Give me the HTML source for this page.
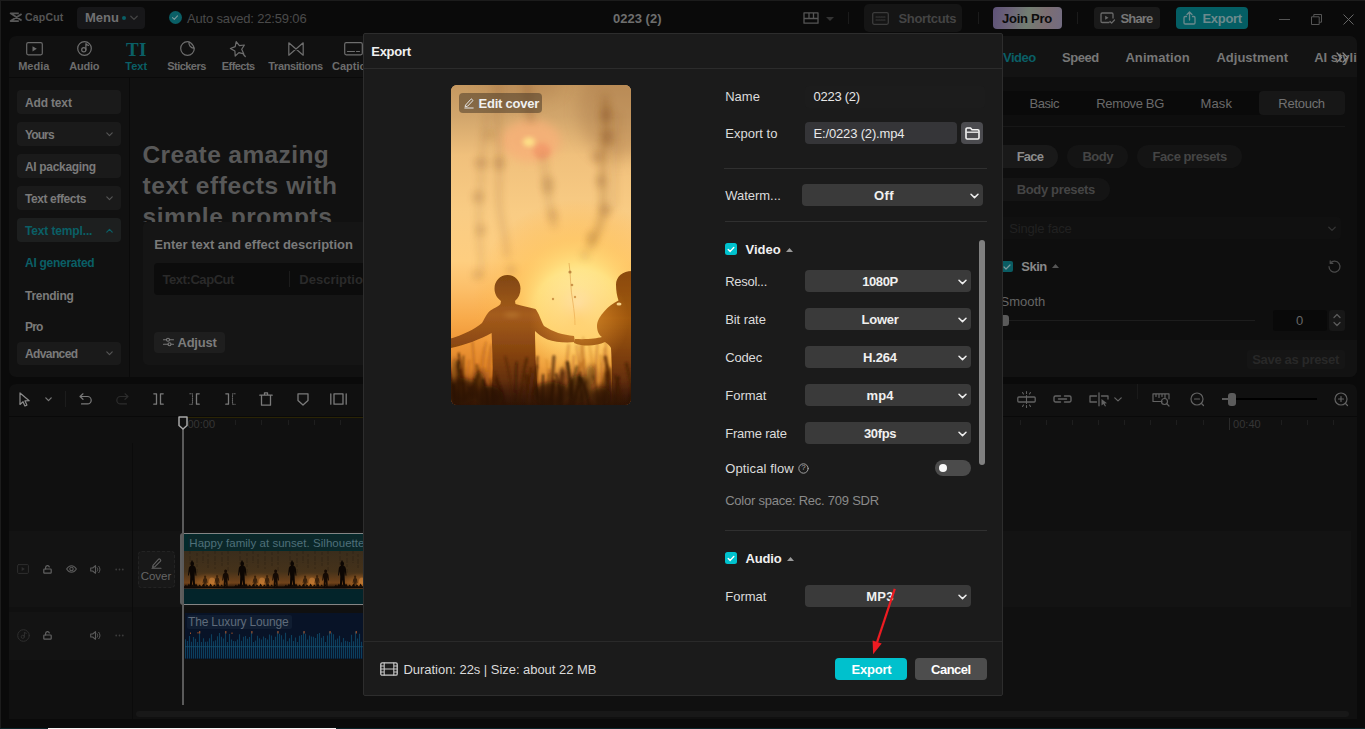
<!DOCTYPE html>
<html><head><meta charset="utf-8"><title>Export</title>
<style>
*{box-sizing:border-box;margin:0;padding:0}
html,body{width:1365px;height:729px;overflow:hidden;background:#0a0a0a;font-family:"Liberation Sans",sans-serif;}
#app{position:absolute;left:0;top:0;width:1365px;height:729px;background:#0a0a0a;overflow:hidden}
.a{position:absolute}
.t{position:absolute;white-space:nowrap;line-height:1;transform:translateY(calc(-50% - .7px));font-size:12px;color:#7a7a7a}
.b{font-weight:bold}
.c{transform:translate(-50%,calc(-50% - .7px))}
.pn{position:absolute;background:#111;}
.sb{position:absolute;left:17px;width:104px;height:24px;background:#1a1a1a;border-radius:4px}
svg{position:absolute;overflow:visible}
.ic{fill:none;stroke:#6e6e6e;stroke-width:1.2;stroke-linecap:round;stroke-linejoin:round}
/* dialog */
#dlg{position:absolute;left:363px;top:33px;width:640px;height:663px;background:#1b1b1b;border:1px solid #2d2d2d;border-radius:2px}
.dt{color:#dcdcdc;font-size:13px}
.dd{position:absolute;height:23px;background:#3a3a3a;border-radius:4px}
.hr{position:absolute;height:1px;background:#303030}
</style></head><body>
<div id="app">
<!--TOPBAR-->
<!-- top bar -->
<div class="a" style="left:0;top:0;width:1365px;height:1px;background:#1c1c1c"></div>
<div class="a" style="left:0;top:0;width:1px;height:729px;background:#1c1c1c"></div>
<svg style="left:8.8px;top:11.8px" width="14" height="11" viewBox="0 0 14 11"><path d="M9.8 1.3H1.600L12.600 8.500M9.800 9.100H1.600L12.600 1.900" fill="none" stroke="#585858" stroke-width="1.8" stroke-linejoin="round" stroke-linecap="butt"/></svg>
<span class="t b" id="lg" style="left:25px;top:17.800px;font-size:10.500px;color:#555;letter-spacing:0.19px">CapCut</span>
<div class="a" style="left:77px;top:7px;width:68px;height:22px;background:#171719;border-radius:4px"></div>
<span class="t b" id="mn" style="left:85px;top:18px;font-size:13px;color:#707072">Menu</span>
<div class="a" style="left:122px;top:16px;width:4px;height:4px;border-radius:2px;background:#0a5f66"></div>
<svg style="left:130px;top:15px" width="8" height="6" viewBox="0 0 8 6"><path d="M.8 1.2 4 4.4 7.200 1.2" class="ic" style="stroke:#444;stroke-width:1.3"/></svg>
<div class="a" style="left:168.500px;top:11px;width:13px;height:13px;border-radius:7px;background:#0a5f66"></div>
<svg style="left:171px;top:14px" width="8" height="7" viewBox="0 0 8 7"><path d="M1.5 3.600 3.300 5.300 6.500 1.800" class="ic" style="stroke:#7a9a9c;stroke-width:1.1"/></svg>
<span class="t" id="as" style="left:187px;top:18.500px;font-size:13px;color:#4a4a4a;letter-spacing:-0.17px">Auto saved: 22:59:06</span>
<span class="t b" id="ttl" style="left:613px;top:18.500px;font-size:13px;color:#6e6e6e;letter-spacing:0.01px">0223 (2)</span>
<svg style="left:803px;top:12px" width="16" height="12" viewBox="0 0 16 12"><path d="M1 .8h14v10.400H1zM1 6.500h14M6 .8v5.700M10.500 .8v5.700" class="ic" style="stroke:#555;stroke-width:1.3"/></svg>
<svg style="left:825.500px;top:16.500px" width="8" height="4" viewBox="0 0 8 4"><path d="M0 0h8L4 4z" fill="#333"/></svg>
<div class="a" style="left:848px;top:12px;width:1px;height:12px;background:#1b1b1b"></div>
<div class="a" style="left:864px;top:4px;width:98px;height:28px;background:#151515;border-radius:5px"></div>
<svg style="left:872px;top:11.500px" width="17" height="13" viewBox="0 0 17 13"><rect x=".7" y=".7" width="15.600" height="11.600" rx="1.5" class="ic" style="stroke:#3c3c3c;stroke-width:1.3"/><path d="M4 5h9M4 8h9" class="ic" style="stroke:#3c3c3c;stroke-width:1.200;stroke-dasharray:1.5 1"/></svg>
<span class="t b" id="sc" style="left:898.500px;top:18.500px;font-size:13px;color:#444;letter-spacing:-0.33px">Shortcuts</span>
<div class="a" style="left:978px;top:12px;width:1px;height:12px;background:#1b1b1b"></div>
<div class="a" style="left:993px;top:7px;width:69px;height:22px;border-radius:4px;background:linear-gradient(100deg,#5e5278 0%,#6c6478 25%,#727e72 50%,#7c6e72 75%,#726c82 100%)"></div>
<span class="t b" id="jp" style="left:1002px;top:18.500px;font-size:13px;color:#0c0c0c;letter-spacing:-0.25px">Join Pro</span>
<div class="a" style="left:1077px;top:12px;width:1px;height:12px;background:#1b1b1b"></div>
<div class="a" style="left:1094px;top:7px;width:66px;height:22px;background:#1a1a1a;border-radius:4px"></div>
<svg style="left:1100px;top:12px" width="15" height="12" viewBox="0 0 15 12"><path d="M9 10.500H2.200A1.200 1.200 0 0 1 1 9.300V2.200A1.200 1.200 0 0 1 2.200 1h9.600A1.200 1.200 0 0 1 13 2.200V6M10 9.500l1.600 1.600 2.900-3.100" class="ic" style="stroke:#6a6a6a;stroke-width:1.3"/><path d="M5.200 3.800v4l3.300-2z" fill="#6a6a6a"/></svg>
<span class="t b" id="sh" style="left:1120.500px;top:18.500px;font-size:13px;color:#777;letter-spacing:-0.83px">Share</span>
<div class="a" style="left:1176px;top:7px;width:72px;height:22px;background:#045e64;border-radius:4px"></div>
<svg style="left:1183px;top:11px" width="13" height="14" viewBox="0 0 13 14"><path d="M3.500 5.500H2.200A1.200 1.200 0 0 0 1 6.700v5.100A1.200 1.200 0 0 0 2.200 13h8.600a1.200 1.200 0 0 0 1.200-1.200V6.700a1.200 1.200 0 0 0-1.200-1.200H9.500M6.500 9V1.200M4 3.500 6.500 1 9 3.500" class="ic" style="stroke:#6c8a8d;stroke-width:1.3"/></svg>
<span class="t b" id="ex" style="left:1202.500px;top:18.500px;font-size:13px;color:#6c8a8d;letter-spacing:-0.3px">Export</span>
<div class="a" style="left:1279px;top:18.500px;width:10.500px;height:1px;background:#555"></div>
<svg style="left:1311px;top:13.500px" width="11" height="11" viewBox="0 0 11 11"><path d="M.5 2.800h7.700v7.700H.5zM2.800 2.800V.5h7.700v7.700H8.200" fill="none" stroke="#555" stroke-width="1"/></svg>
<svg style="left:1343px;top:13.500px" width="11" height="11" viewBox="0 0 11 11"><path d="M.5.500l10 10M10.500.5l-10 10" fill="none" stroke="#666" stroke-width="1"/></svg>
<!--/TOPBAR-->
<!--LEFT-->
<!-- left panel -->
<div class="pn" style="left:9px;top:36px;width:354px;height:341px;border-radius:7px 0 0 7px"></div>
<div class="a" style="left:9px;top:77px;width:354px;height:1px;background:#0a0a0a"></div>
<div class="a" style="left:129px;top:78px;width:1px;height:299px;background:#0a0a0a"></div>
<!-- tabs -->
<svg style="left:26px;top:41.8px" width="17" height="14" viewBox="0 0 17 14"><rect x=".7" y=".7" width="15.600" height="12.100" rx="1.5" class="ic" style="stroke:#6a6a6a"/><path d="M6.500 4.200v5.200l4.300-2.600z" fill="#6a6a6a"/></svg>
<span class="t b c" id="t1" style="left:33.800px;top:66.500px;font-size:11px;color:#6c6c6c">Media</span>
<svg style="left:77px;top:41.3px" width="15" height="15" viewBox="0 0 15 15"><circle cx="7.500" cy="7.500" r="6.800" class="ic"/><circle cx="6.800" cy="8.800" r="2.100" class="ic"/><path d="M8.900 8.800V2.500c.5 1.200 1.500 1.700 2.600 1.900" class="ic"/></svg>
<span class="t b c" id="t2" style="left:84.300px;top:66.500px;font-size:11px;color:#6c6c6c;letter-spacing:-0.23px">Audio</span>
<span class="t b c" id="t3i" style="left:136.300px;top:49.700px;font-size:19px;color:#0a5f66;font-family:'Liberation Serif',serif;letter-spacing:.3px">TI</span>
<span class="t b c" id="t3" style="left:136.200px;top:66.500px;font-size:11px;color:#0a5f66">Text</span>
<svg style="left:179.500px;top:41.3px" width="15" height="15" viewBox="0 0 15 15"><path d="M14.300 7.500A6.800 6.800 0 1 1 7.500.7c.5 0 1 .1 1.500.2M14.300 7.500C13.500 4.500 11.500 2 9 .9M9 .9c-.6 3.300 1.400 6 5.300 6.600" class="ic"/></svg>
<span class="t b c" id="t4" style="left:186.500px;top:66.500px;font-size:11px;color:#6c6c6c;letter-spacing:-0.55px">Stickers</span>
<svg style="left:229.500px;top:40.8px" width="17" height="17" viewBox="0 0 17 17"><path d="M6.2 0.6 L9.4 4.6 L14.4 4.0 L11.7 8.3 L13.8 12.9 L8.9 11.6 L5.2 15.0 L4.9 10.0 L0.4 7.5 L5.2 5.6Z" class="ic"/><path d="M13.500 13.500l1.800 2" class="ic"/></svg>
<span class="t b c" id="t5" style="left:238.200px;top:66.500px;font-size:11px;color:#6c6c6c;letter-spacing:-0.53px">Effects</span>
<svg style="left:288px;top:41.8px" width="16" height="14" viewBox="0 0 16 14"><path d="M.8.800v12.400L15.200.8v12.400z" class="ic"/></svg>
<span class="t b c" id="t6" style="left:295.500px;top:66.500px;font-size:11px;color:#6c6c6c;letter-spacing:-0.39px">Transitions</span>
<svg style="left:343.500px;top:41.8px" width="19" height="14" viewBox="0 0 19 14"><rect x=".7" y=".7" width="17.600" height="12.100" rx="1.500" class="ic"/><path d="M3.500 9.500h7M12.500 9.500h3" class="ic"/></svg>
<span class="t b" id="t7" style="left:332px;top:66.500px;font-size:11px;color:#6c6c6c">Captions</span>
<!-- sidebar -->
<div class="sb" style="top:90px"></div><span class="t b" id="s1" style="left:25px;top:104px;color:#7a7a7a;letter-spacing:-0.16px">Add text</span>
<div class="sb" style="top:122px"></div><span class="t b" id="s2" style="left:25px;top:136px;color:#7a7a7a;letter-spacing:-0.89px">Yours</span>
<svg style="left:105.500px;top:131.500px" width="7" height="5" viewBox="0 0 7 5"><path d="M.8.900 3.500 3.600 6.200.9" class="ic" style="stroke:#555;stroke-width:1.200"/></svg>
<div class="sb" style="top:154px"></div><span class="t b" id="s3" style="left:25px;top:168px;color:#7a7a7a;letter-spacing:-0.33px">AI packaging</span>
<div class="sb" style="top:186px"></div><span class="t b" id="s4" style="left:25px;top:200px;color:#7a7a7a;letter-spacing:-0.4px">Text effects</span>
<svg style="left:105.500px;top:195.500px" width="7" height="5" viewBox="0 0 7 5"><path d="M.8.900 3.500 3.600 6.200.9" class="ic" style="stroke:#555;stroke-width:1.200"/></svg>
<div class="sb" style="top:218px;background:#1d1f1f"></div><span class="t b" id="s5" style="left:25px;top:232px;color:#0a5f66;letter-spacing:-0.14px">Text templ...</span>
<svg style="left:105.500px;top:227.500px" width="7" height="5" viewBox="0 0 7 5"><path d="M.8 4.100 3.500 1.400 6.200 4.100" class="ic" style="stroke:#0a5f66;stroke-width:1.200"/></svg>
<span class="t b" id="s6" style="left:25px;top:264px;color:#0a5f66;letter-spacing:-0.28px">AI generated</span>
<span class="t b" id="s7" style="left:25px;top:296.5px;color:#7a7a7a;letter-spacing:-0.27px">Trending</span>
<span class="t b" id="s8" style="left:25px;top:328px;color:#7a7a7a;letter-spacing:-0.84px">Pro</span>
<div class="sb" style="top:342px;height:23px"></div><span class="t b" id="s9" style="left:25px;top:355px;color:#7a7a7a;letter-spacing:-0.61px">Advanced</span>
<svg style="left:105.500px;top:350.500px" width="7" height="5" viewBox="0 0 7 5"><path d="M.8.900 3.500 3.600 6.200.9" class="ic" style="stroke:#555;stroke-width:1.200"/></svg>
<!-- content -->
<div class="a" style="left:130px;top:78px;width:233px;height:143.500px;overflow:hidden">
<span class="t b" id="h1" style="left:12.500px;top:76.500px;font-size:24.500px;color:#585858;transform:translateY(-50%);letter-spacing:0.4px">Create amazing</span>
<span class="t b" id="h2" style="left:12.500px;top:108.500px;font-size:24.500px;color:#585858;letter-spacing:0.58px">text effects with</span>
<span class="t b" id="h3" style="left:12.500px;top:140px;font-size:24.500px;color:#585858;letter-spacing:0.54px">simple prompts</span>
</div>
<div class="a" style="left:142.500px;top:221.500px;width:221px;height:143.500px;background:#151515;border-radius:5px 0 0 5px"></div>
<span class="t b" id="c1" style="left:154.300px;top:244.500px;font-size:13px;color:#7a7a7a">Enter text and effect description</span>
<div class="a" style="left:153.500px;top:263px;width:210px;height:32px;background:#0c0c0c;border-radius:4px 0 0 4px"></div>
<span class="t b" id="c2" style="left:162.500px;top:279.500px;font-size:13px;color:#2a2a2a;letter-spacing:-0.44px">Text:CapCut</span>
<div class="a" style="left:289px;top:271px;width:1px;height:16px;background:#1c1c1c"></div>
<span class="t b" id="c3" style="left:299.300px;top:279.500px;font-size:13px;color:#2a2a2a">Description</span>
<div class="a" style="left:154px;top:331.500px;width:71px;height:21.500px;background:#1e1e1e;border-radius:4px"></div>
<svg style="left:163px;top:337px" width="11" height="10" viewBox="0 0 11 10"><path d="M.5 2.800h3M6.500 2.800h4M.5 7.200h4.500M8 7.200h2.500" class="ic" style="stroke:#7a7a7a;stroke-width:1.100"/><circle cx="5" cy="2.800" r="1.500" class="ic" style="stroke:#7a7a7a;stroke-width:1.100"/><circle cx="6.500" cy="7.200" r="1.500" class="ic" style="stroke:#7a7a7a;stroke-width:1.100"/></svg>
<span class="t b" id="c4" style="left:177.500px;top:342.500px;font-size:13px;color:#7c7c7c;letter-spacing:-0.24px">Adjust</span>
<!--/LEFT-->
<!--RIGHT-->
<!-- right panel -->
<div class="pn" style="left:1002px;top:36px;width:355px;height:341px;border-radius:0 7px 7px 0;background:#0e0e0e"></div>
<div class="a" style="left:1002px;top:36px;width:355px;height:41px;border-radius:0 7px 0 0;background:#131313"></div>
<span class="t b" id="r1" style="left:1003px;top:58px;font-size:13px;color:#0a5f66;letter-spacing:-0.49px">Video</span>
<span class="t b" id="r2" style="left:1062px;top:58px;font-size:13px;color:#777;letter-spacing:-0.46px">Speed</span>
<span class="t b" id="r3" style="left:1125.400px;top:58px;font-size:13px;color:#777;letter-spacing:0.09px">Animation</span>
<span class="t b" id="r4" style="left:1216.400px;top:58px;font-size:13px;color:#777;letter-spacing:0.02px">Adjustment</span>
<div class="a" style="left:1300px;top:40px;width:57px;height:34px;overflow:hidden"><span class="t b" id="r5" style="left:14.200px;top:18px;font-size:13px;color:#777">AI stylize</span></div>
<svg style="left:1336px;top:52px" width="14" height="11" viewBox="0 0 14 11"><path d="M1 1l4.500 4.500L1 10M7 1l4.500 4.500L7 10" class="ic" style="stroke:#8a8a8a;stroke-width:1.300"/></svg>
<div class="a" style="left:1002px;top:91px;width:343px;height:24px;background:#0a0a0a;border-radius:0 4px 4px 0"></div>
<div class="a" style="left:1259px;top:91px;width:86px;height:24px;background:#171717;border-radius:4px"></div>
<span class="t" id="r6" style="left:1029.500px;top:104px;font-size:13px;color:#6a6a6a;letter-spacing:-0.44px">Basic</span>
<span class="t" id="r7" style="left:1096.300px;top:104px;font-size:13px;color:#6a6a6a;letter-spacing:-0.35px">Remove BG</span>
<span class="t" id="r8" style="left:1200.400px;top:104px;font-size:13px;color:#6a6a6a;letter-spacing:0.18px">Mask</span>
<span class="t" id="r9" style="left:1278.300px;top:104px;font-size:13px;color:#727272;letter-spacing:-0.27px">Retouch</span>
<div class="a" style="left:1002px;top:126px;width:343px;height:1px;background:#171717"></div>
<div class="a" style="left:990px;top:144.500px;width:68px;height:23.500px;background:#191919;border-radius:12px"></div>
<span class="t b" id="r10" style="left:1016.700px;top:157px;font-size:13px;color:#8c8c8c;letter-spacing:-0.81px">Face</span>
<div class="a" style="left:1067px;top:144.500px;width:61px;height:23.500px;background:#141414;border-radius:12px"></div>
<span class="t b" id="r11" style="left:1082.500px;top:157px;font-size:13px;color:#454545;letter-spacing:-0.53px">Body</span>
<div class="a" style="left:1137px;top:144.500px;width:105px;height:23.500px;background:#141414;border-radius:12px"></div>
<span class="t b" id="r12" style="left:1152.600px;top:157px;font-size:13px;color:#454545;letter-spacing:-0.45px">Face presets</span>
<div class="a" style="left:990px;top:177.500px;width:120px;height:23.500px;background:#141414;border-radius:12px"></div>
<span class="t b" id="r13" style="left:1016.700px;top:190px;font-size:13px;color:#454545;letter-spacing:-0.34px">Body presets</span>
<div class="a" style="left:1002px;top:217px;width:339px;height:21.500px;background:#101010;border-radius:0 4px 4px 0"></div>
<span class="t" id="r14" style="left:1009.300px;top:229px;font-size:13px;color:#212121;letter-spacing:-0.19px">Single face</span>
<svg style="left:1328px;top:226px" width="8" height="6" viewBox="0 0 8 6"><path d="M.8 1.200 4 4.400 7.200 1.200" class="ic" style="stroke:#333;stroke-width:1.300"/></svg>
<div class="a" style="left:1001px;top:261px;width:11.500px;height:11px;background:#0a5c63;border-radius:2px"></div>
<svg style="left:1003px;top:263.500px" width="8" height="6" viewBox="0 0 8 6"><path d="M1 3l2 2 4-4" class="ic" style="stroke:#7a9a9c;stroke-width:1.200"/></svg>
<span class="t b" id="r15" style="left:1021.300px;top:266.500px;font-size:13px;color:#888;letter-spacing:-0.49px">Skin</span>
<svg style="left:1051.500px;top:264px" width="7" height="4" viewBox="0 0 7 4"><path d="M0 4h7L3.500 0z" fill="#555"/></svg>
<svg style="left:1327.500px;top:259.500px" width="13" height="13" viewBox="0 0 13 13"><path d="M2.200 3.200A5.500 5.500 0 1 1 1 6.500M2.200.8v2.600h2.600" class="ic" style="stroke:#4a4a4a;stroke-width:1.200"/></svg>
<span class="t" id="r16" style="left:1000.500px;top:302px;font-size:13px;color:#666">Smooth</span>
<div class="a" style="left:1002px;top:319.500px;width:253px;height:1.500px;background:#1d1d1d"></div>
<div class="a" style="left:1000px;top:314.500px;width:8.500px;height:11px;background:#5a5a5a;border-radius:3px"></div>
<div class="a" style="left:1273px;top:309.500px;width:54px;height:21px;background:#090909;border-radius:3px"></div>
<span class="t c" style="left:1299.500px;top:320.500px;font-size:13px;color:#666">0</span>
<div class="a" style="left:1329px;top:309.500px;width:16px;height:21px;background:#171717;border-radius:3px"></div>
<svg style="left:1333px;top:313px" width="8" height="14" viewBox="0 0 8 14"><path d="M1 4.500l3-3 3 3M1 9.500l3 3 3-3" class="ic" style="stroke:#5a5a5a;stroke-width:1.300"/></svg>
<div class="a" style="left:1002px;top:340px;width:355px;height:37px;background:#121212;border-radius:0 0 7px 0"></div>
<div class="a" style="left:1246.500px;top:349.500px;width:98.500px;height:19.500px;background:#151515;border-radius:3px"></div>
<span class="t b" id="r17" style="left:1252.200px;top:359.500px;font-size:13px;color:#282828;letter-spacing:-0.31px">Save as preset</span>
<!--/RIGHT-->
<!--TIMELINE-->
<!-- timeline -->
<div class="pn" style="left:9px;top:383.500px;width:1348px;height:335.500px;border-radius:7px 7px 0 0;background:#101010"></div>
<div class="a" style="left:9px;top:415.500px;width:1348px;height:1px;background:#090909"></div>
<div class="a" style="left:183px;top:416.500px;width:575px;height:1px;background:#2a2405"></div>
<svg style="left:19px;top:392px" width="13" height="15" viewBox="0 0 13 15"><path d="M1 1v11.500l3-2.800 1.900 4.300 2-.9-1.900-4.200 4.200-.2z" class="ic" style="stroke:#8a8a8a;stroke-width:1.200"/></svg>
<svg style="left:44.500px;top:397px" width="7" height="5" viewBox="0 0 7 5"><path d="M.8.900 3.500 3.600 6.200.9" class="ic" style="stroke:#777;stroke-width:1.300"/></svg>
<div class="a" style="left:65px;top:390.500px;width:1px;height:16px;background:#1c1c1c"></div>
<svg style="left:79px;top:392.500px" width="13" height="13" viewBox="0 0 13 13"><path d="M1 3.500h7.500a3.700 3.700 0 0 1 0 7.400H2.500M4 .8 1 3.500 4 6.300" class="ic" style="stroke:#7a7a7a;stroke-width:1.200"/></svg>
<svg style="left:116px;top:392.500px" width="13" height="13" viewBox="0 0 13 13"><path d="M12 3.500H4.500a3.700 3.700 0 0 0 0 7.400h6M9 .8l3 2.700-3 2.800" class="ic" style="stroke:#2c2c2c;stroke-width:1.200"/></svg>
<svg style="left:153px;top:393px" width="11" height="12" viewBox="0 0 11 12"><path d="M.8.800h2.700v10.400H.8M10.200.8H7.500v10.400h2.700" class="ic" style="stroke:#7a7a7a;stroke-width:1.300"/></svg>
<svg style="left:188.500px;top:393px" width="11" height="12" viewBox="0 0 11 12"><path d="M10.200.8H7.500v10.400h2.700" class="ic" style="stroke:#7a7a7a;stroke-width:1.300"/><path d="M.8.800h2.700v10.400H.8" class="ic" style="stroke:#626262;stroke-width:1.100;stroke-dasharray:1 1.200"/></svg>
<svg style="left:225px;top:393px" width="11" height="12" viewBox="0 0 11 12"><path d="M.8.800h2.700v10.400H.8" class="ic" style="stroke:#7a7a7a;stroke-width:1.300"/><path d="M10.200.8H7.500v10.400h2.700" class="ic" style="stroke:#626262;stroke-width:1.100;stroke-dasharray:1 1.200"/></svg>
<svg style="left:259px;top:391.500px" width="14" height="14" viewBox="0 0 14 14"><path d="M.8 3.200h12.400M5.500 3V.8h3V3M2.500 3.200v10h9v-10" class="ic" style="stroke:#7a7a7a;stroke-width:1.300"/></svg>
<svg style="left:296.500px;top:393px" width="12" height="13" viewBox="0 0 12 13"><path d="M1 .8h10v6.700L6 12 1 7.500z" class="ic" style="stroke:#7a7a7a;stroke-width:1.300"/></svg>
<svg style="left:329.500px;top:393px" width="17" height="12" viewBox="0 0 17 12"><path d="M.8.800v10.400M16.200.8v10.400" class="ic" style="stroke:#7a7a7a;stroke-width:1.300"/><rect x="4" y=".8" width="9" height="10.400" class="ic" style="stroke:#7a7a7a;stroke-width:1.300"/></svg>
<svg style="left:1017px;top:390.500px" width="19" height="17" viewBox="0 0 19 17"><rect x=".8" y="6" width="17.400" height="5" rx="1" class="ic" style="stroke:#626262;stroke-width:1.300"/><path d="M9.500 4.500v8M9.500.5v2M9.500 14.500v2M5.500 1.500l1 1.500M13.500 1.500l-1 1.500M5.500 15.500l1-1.500M13.500 15.500l-1-1.500" class="ic" style="stroke:#626262;stroke-width:1.100"/></svg>
<svg style="left:1053px;top:395px" width="19" height="8" viewBox="0 0 19 8"><path d="M7.500 1H2.500A1.500 1.500 0 0 0 1 2.500v3A1.500 1.500 0 0 0 2.500 7h5M11.500 1h5A1.500 1.500 0 0 1 18 2.500v3A1.500 1.500 0 0 1 16.500 7h-5M5.500 4h8" class="ic" style="stroke:#626262;stroke-width:1.400"/></svg>
<svg style="left:1088.500px;top:392px" width="20" height="15" viewBox="0 0 20 15"><path d="M7.500 4H1v6h6.500M12.500 4H19v3M10 .8v13" class="ic" style="stroke:#626262;stroke-width:1.300"/><path d="M12.500 7v6.500l2-1.500 1.500 2.500 1-.6-1.400-2.400 2.400-.3z" fill="#626262"/></svg>
<svg style="left:1114px;top:397px" width="8" height="5" viewBox="0 0 8 5"><path d="M.8.900 4 3.900 7.200.9" class="ic" style="stroke:#626262;stroke-width:1.300"/></svg>
<div class="a" style="left:1136.500px;top:384px;width:1px;height:15px;background:#1a1a1a"></div>
<svg style="left:1151.500px;top:392.500px" width="19" height="14" viewBox="0 0 19 14"><path d="M10 8.500H1V.8h16v5M4 1v2.500M7 1v3.500M10 1v2.500M13 1v3.500" class="ic" style="stroke:#626262;stroke-width:1.200"/><circle cx="12.500" cy="8.500" r="3" class="ic" style="stroke:#626262;stroke-width:1.200"/><path d="M14.700 10.700l2.300 2.300" class="ic" style="stroke:#626262;stroke-width:1.200"/></svg>
<svg style="left:1190px;top:392px" width="15" height="15" viewBox="0 0 15 15"><circle cx="7" cy="7" r="6" class="ic" style="stroke:#626262;stroke-width:1.200"/><path d="M4.500 7h5M11.500 11.500l2 2" class="ic" style="stroke:#626262;stroke-width:1.200"/></svg>
<div class="a" style="left:1221.500px;top:398.200px;width:95px;height:2px;background:#000"></div>
<div class="a" style="left:1221.500px;top:398.200px;width:8px;height:2px;background:#5a5a5a"></div>
<div class="a" style="left:1228px;top:393px;width:7.500px;height:12.500px;background:#5c5c5c;border-radius:3px"></div>
<svg style="left:1334px;top:392px" width="15" height="15" viewBox="0 0 15 15"><circle cx="7" cy="7" r="6" class="ic" style="stroke:#626262;stroke-width:1.200"/><path d="M4.500 7h5M7 4.500v5M11.500 11.500l2 2" class="ic" style="stroke:#626262;stroke-width:1.200"/></svg>
<div class="a" style="left:209.1px;top:419.500px;width:1px;height:5px;background:#1e1e1e"></div><div class="a" style="left:235.3px;top:419.500px;width:1px;height:5px;background:#1e1e1e"></div><div class="a" style="left:261.4px;top:419.500px;width:1px;height:5px;background:#1e1e1e"></div><div class="a" style="left:287.6px;top:419.500px;width:1px;height:5px;background:#1e1e1e"></div><div class="a" style="left:313.7px;top:419.500px;width:1px;height:5px;background:#1e1e1e"></div><div class="a" style="left:339.8px;top:419.500px;width:1px;height:5px;background:#1e1e1e"></div><div class="a" style="left:366.0px;top:419.500px;width:1px;height:5px;background:#1e1e1e"></div><div class="a" style="left:392.1px;top:419.500px;width:1px;height:5px;background:#1e1e1e"></div><div class="a" style="left:418.3px;top:419.500px;width:1px;height:5px;background:#1e1e1e"></div><div class="a" style="left:444.4px;top:417.500px;width:1px;height:12px;background:#2a2a2a"></div><div class="a" style="left:470.5px;top:419.500px;width:1px;height:5px;background:#1e1e1e"></div><div class="a" style="left:496.7px;top:419.500px;width:1px;height:5px;background:#1e1e1e"></div><div class="a" style="left:522.8px;top:419.500px;width:1px;height:5px;background:#1e1e1e"></div><div class="a" style="left:549.0px;top:419.500px;width:1px;height:5px;background:#1e1e1e"></div><div class="a" style="left:575.1px;top:419.500px;width:1px;height:5px;background:#1e1e1e"></div><div class="a" style="left:601.2px;top:419.500px;width:1px;height:5px;background:#1e1e1e"></div><div class="a" style="left:627.4px;top:419.500px;width:1px;height:5px;background:#1e1e1e"></div><div class="a" style="left:653.5px;top:419.500px;width:1px;height:5px;background:#1e1e1e"></div><div class="a" style="left:679.7px;top:419.500px;width:1px;height:5px;background:#1e1e1e"></div><div class="a" style="left:705.8px;top:417.500px;width:1px;height:12px;background:#2a2a2a"></div><div class="a" style="left:731.9px;top:419.500px;width:1px;height:5px;background:#1e1e1e"></div><div class="a" style="left:758.1px;top:419.500px;width:1px;height:5px;background:#1e1e1e"></div><div class="a" style="left:784.2px;top:419.500px;width:1px;height:5px;background:#1e1e1e"></div><div class="a" style="left:810.4px;top:419.500px;width:1px;height:5px;background:#1e1e1e"></div><div class="a" style="left:836.5px;top:419.500px;width:1px;height:5px;background:#1e1e1e"></div><div class="a" style="left:862.6px;top:419.500px;width:1px;height:5px;background:#1e1e1e"></div><div class="a" style="left:888.8px;top:419.500px;width:1px;height:5px;background:#1e1e1e"></div><div class="a" style="left:914.9px;top:419.500px;width:1px;height:5px;background:#1e1e1e"></div><div class="a" style="left:941.1px;top:419.500px;width:1px;height:5px;background:#1e1e1e"></div><div class="a" style="left:967.2px;top:417.500px;width:1px;height:12px;background:#2a2a2a"></div><div class="a" style="left:993.3px;top:419.500px;width:1px;height:5px;background:#1e1e1e"></div><div class="a" style="left:1019.5px;top:419.500px;width:1px;height:5px;background:#1e1e1e"></div><div class="a" style="left:1045.6px;top:419.500px;width:1px;height:5px;background:#1e1e1e"></div><div class="a" style="left:1071.8px;top:419.500px;width:1px;height:5px;background:#1e1e1e"></div><div class="a" style="left:1097.9px;top:419.500px;width:1px;height:5px;background:#1e1e1e"></div><div class="a" style="left:1124.0px;top:419.500px;width:1px;height:5px;background:#1e1e1e"></div><div class="a" style="left:1150.2px;top:419.500px;width:1px;height:5px;background:#1e1e1e"></div><div class="a" style="left:1176.3px;top:419.500px;width:1px;height:5px;background:#1e1e1e"></div><div class="a" style="left:1202.5px;top:419.500px;width:1px;height:5px;background:#1e1e1e"></div><div class="a" style="left:1228.6px;top:417.500px;width:1px;height:12px;background:#2a2a2a"></div><div class="a" style="left:1254.7px;top:419.500px;width:1px;height:5px;background:#1e1e1e"></div><div class="a" style="left:1280.9px;top:419.500px;width:1px;height:5px;background:#1e1e1e"></div><div class="a" style="left:1307.0px;top:419.500px;width:1px;height:5px;background:#1e1e1e"></div><div class="a" style="left:1333.2px;top:419.500px;width:1px;height:5px;background:#1e1e1e"></div>
<span class="t" style="left:187.500px;top:425px;font-size:11px;color:#353535">00:00</span>
<span class="t" style="left:448.9px;top:425px;font-size:11px;color:#353535">00:10</span>
<span class="t" style="left:710.3px;top:425px;font-size:11px;color:#353535">00:20</span>
<span class="t" style="left:971.7px;top:425px;font-size:11px;color:#353535">00:30</span>
<span class="t" style="left:1233.1px;top:425px;font-size:11px;color:#353535">00:40</span>
<div class="a" style="left:9px;top:530.500px;width:1342px;height:76px;background:#131313"></div>
<div class="a" style="left:9px;top:611.500px;width:123px;height:48.500px;background:#131313"></div>
<div class="a" style="left:132px;top:442.500px;width:1px;height:276.500px;background:#0b0b0b"></div>
<svg style="left:17px;top:564px" width="12" height="10" viewBox="0 0 12 10"><rect x=".6" y=".6" width="10.800" height="8.800" rx="1" class="ic" style="stroke:#2e2e2e;stroke-width:1"/><path d="M4.700 3v4l3.200-2z" fill="#2e2e2e"/></svg><svg style="left:42.500px;top:564.5px" width="9" height="9" viewBox="0 0 9 9"><rect x=".8" y="4" width="7.400" height="4.200" rx=".8" class="ic" style="stroke:#626262;stroke-width:1.200"/><path d="M2.600 4V2.500a1.900 1.900 0 0 1 3.700-.5" class="ic" style="stroke:#626262;stroke-width:1.200"/></svg><svg style="left:65.500px;top:565px" width="11" height="8" viewBox="0 0 11 8"><path d="M.6 4C2 1.700 3.600.7 5.500.7S9 1.700 10.400 4C9 6.300 7.400 7.300 5.500 7.300S2 6.300.6 4z" class="ic" style="stroke:#5a5a5a;stroke-width:1.100"/><circle cx="5.500" cy="4" r="1.700" class="ic" style="stroke:#5a5a5a;stroke-width:1.100"/></svg><svg style="left:89.500px;top:564.5px" width="11" height="9" viewBox="0 0 11 9"><path d="M.7 3h2l2.800-2.300v7.600L2.700 6h-2z" class="ic" style="stroke:#5a5a5a;stroke-width:1.100"/><path d="M7.200 2.800c.7.900.7 2.500 0 3.400M8.800 1.300c1.600 1.800 1.600 4.600 0 6.400" class="ic" style="stroke:#5a5a5a;stroke-width:1"/></svg><svg style="left:114.500px;top:567.5px" width="9" height="3" viewBox="0 0 9 3"><circle cx="1.200" cy="1.500" r=".9" fill="#3c3c3c"/><circle cx="4.500" cy="1.500" r=".9" fill="#3c3c3c"/><circle cx="7.800" cy="1.500" r=".9" fill="#3c3c3c"/></svg>
<svg style="left:16.500px;top:629px" width="13" height="13" viewBox="0 0 13 13"><circle cx="6.500" cy="6.500" r="5.800" class="ic" style="stroke:#2e2e2e;stroke-width:1"/><circle cx="5.800" cy="7.800" r="1.600" class="ic" style="stroke:#2e2e2e;stroke-width:1"/><path d="M7.400 7.800V3c.4.900 1.100 1.300 1.900 1.400" class="ic" style="stroke:#2e2e2e;stroke-width:1"/></svg><svg style="left:42.500px;top:631px" width="9" height="9" viewBox="0 0 9 9"><rect x=".8" y="4" width="7.400" height="4.200" rx=".8" class="ic" style="stroke:#626262;stroke-width:1.200"/><path d="M2.600 4V2.500a1.900 1.900 0 0 1 3.700-.5" class="ic" style="stroke:#626262;stroke-width:1.200"/></svg><svg style="left:89.500px;top:631px" width="11" height="9" viewBox="0 0 11 9"><path d="M.7 3h2l2.800-2.300v7.600L2.700 6h-2z" class="ic" style="stroke:#5a5a5a;stroke-width:1.100"/><path d="M7.200 2.800c.7.900.7 2.500 0 3.400M8.800 1.300c1.600 1.800 1.600 4.600 0 6.400" class="ic" style="stroke:#5a5a5a;stroke-width:1"/></svg><svg style="left:114.500px;top:634px" width="9" height="3" viewBox="0 0 9 3"><circle cx="1.200" cy="1.500" r=".9" fill="#3c3c3c"/><circle cx="4.500" cy="1.500" r=".9" fill="#3c3c3c"/><circle cx="7.800" cy="1.500" r=".9" fill="#3c3c3c"/></svg>
<div class="a" style="left:137.500px;top:551px;width:37px;height:36.500px;background:#181818;border:1px dashed #232323;border-radius:4px"></div>
<svg style="left:150.500px;top:556.500px" width="11" height="12" viewBox="0 0 11 12"><path d="M2 8.300 7.600 2.200a.9.900 0 0 1 1.300 0l.6.600a.9.900 0 0 1 0 1.300L4 9.700l-2.300.5zM1 11.300h9" class="ic" style="stroke:#626262;stroke-width:1.100"/></svg>
<span class="t c" id="cv" style="left:156px;top:576.500px;font-size:11.500px;color:#666">Cover</span>
<!--/TIMELINE-->
<!--CLIPS-->
<!-- clips -->
<div class="a" style="left:180px;top:533px;width:184px;height:72px;background:linear-gradient(90deg,#5e5e5e 0,#5e5e5e 3.500px,#858585 3.500px);border-radius:3px 0 0 3px"></div>
<div class="a" style="left:183.500px;top:534px;width:180px;height:17px;background:#032a2c"></div>
<div class="a" style="left:187.500px;top:535px;width:176px;height:15px;background:#0b2729;border-radius:2px 0 0 2px"></div>
<div class="a" style="left:183.500px;top:588.500px;width:180px;height:15.500px;background:#03242a"></div>
<div class="a" style="left:189.300px;top:534px;width:174px;height:17px;overflow:hidden"><span class="t" id="ct" style="left:0;top:9.500px;font-size:11.500px;color:#4f707a;letter-spacing:.04px">Happy family at sunset. Silhouette</span></div>
<svg style="left:183.500px;top:551px;overflow:hidden" width="180" height="37.500" viewBox="0 0 180 37.500">
<defs><linearGradient id="tg" x1="0" y1="0" x2="0" y2="1"><stop offset="0" stop-color="#3a2d1c"/><stop offset=".55" stop-color="#45321a"/><stop offset=".85" stop-color="#70421a"/><stop offset="1" stop-color="#120904"/></linearGradient><radialGradient id="tr" cx=".5" cy=".75" r=".5"><stop offset="0" stop-color="#c07428" stop-opacity=".8"/><stop offset="1" stop-color="#c07428" stop-opacity="0"/></radialGradient><g id="tile"><rect width="50" height="37.500" fill="url(#tg)"/><ellipse cx="26" cy="28" rx="22" ry="12" fill="url(#tr)"/><ellipse cx="28" cy="30" rx="3" ry="3.500" fill="#e09040" opacity=".45"/><path d="M8 10.500c1.300 0 2 1 2 2.200 0 .9-.3 1.500-.8 1.900 1.600.5 2.500 1.700 2.700 3.500l.6 6.500-.9.200-.7-4.500-.3 5.500.5 9.500H9.300L8.600 28.800l-.9 6.500H5.900l.4-9.700-.6-5.300-.8 4.300-.9-.2.700-6.300c.2-1.900 1.100-3 2.500-3.500-.5-.4-.8-1-.8-1.900 0-1.200.7-2.200 1.600-2.200z" fill="#0c0603"/><path d="M8 9l1.200 1.800H6.800z" fill="#0c0603"/><path d="M21 24.500c.7 0 1.200.6 1.200 1.300 0 .5-.2.900-.5 1.100.9.300 1.400 1 1.500 2l.4 3.200-.6.100-.4-2.200v6h-1l-.4-4.200-.5 4.200h-1v-6l-.5 2.200-.6-.1.500-3.200c.1-1 .6-1.700 1.400-2-.3-.2-.5-.6-.5-1.100 0-.7.500-1.300 1-1.300z" fill="#3a220c"/><path d="M33 24c.7 0 1.200.6 1.200 1.300 0 .5-.2.900-.5 1.100.9.300 1.400 1 1.500 2l.4 3.400-.6.100-.4-2.300v6.400h-1l-.4-4.400-.5 4.400h-1v-6.400l-.5 2.300-.6-.1.500-3.400c.1-1 .6-1.700 1.400-2-.3-.2-.5-.6-.5-1.100 0-.7.500-1.300 1-1.300z" fill="#3a220c"/><path d="M41.500 18.500c1 0 1.600.8 1.600 1.800 0 .7-.2 1.200-.6 1.500 1.200.4 1.900 1.400 2 2.700l.5 5-.8.100-.5-3.500-.2 4 .3 6h-1.500l-.4-5.600-.8 5.600h-1.500l.3-6.300-.3-3.700-.6 3.400-.8-.1.600-4.900c.1-1.400.8-2.300 2-2.700-.4-.3-.6-.8-.6-1.500 0-1 .6-1.800 1.300-1.800z" fill="#140a04"/><path d="M6 0v14M13 2v20M19 0v12M24 3v16M31 0v18M38 1v14M44 0v20" stroke="#1c140c" stroke-width="1" opacity=".35" stroke-dasharray="3 2 5 1"/><rect y="35.500" width="50" height="2" fill="#0e0703"/><path d="M0 36l2-2.500 1 2 2-3 1.500 3 2-2 1.500 2 2-3 2 3 1.500-2 2 2 2-3 1.500 3 2-2 2 2 1.500-3 2 3 2-2 1.500 2 2-3 2 3 1.500-2 2 2 2-2.500 1 2.500z" fill="#120904"/></g></defs>
<use href="#tile" x="0" y="0"/>
<use href="#tile" x="50" y="0"/>
<use href="#tile" x="100" y="0"/>
<use href="#tile" x="150" y="0"/>
</svg>
<div class="a" style="left:184.500px;top:612.500px;width:179px;height:46.500px;background:#081327"></div>
<div class="a" style="left:187px;top:615px;width:104.500px;height:13.500px;background:#101d31;border-radius:2px"></div>
<span class="t" id="at" style="left:188px;top:622.500px;font-size:12px;color:#5f6b7a;letter-spacing:-0.17px">The Luxury Lounge</span>
<svg style="left:184.500px;top:630px" width="179" height="29" viewBox="0 0 179 29">
<path d="M0.5 28.500v-19.2M2.5 28.500v-17.5M4.5 28.500v-22.5M6.5 28.500v-16.7M8.5 28.500v-21.4M10.5 28.500v-19.7M12.5 28.500v-16.6M14.5 28.500v-27M16.5 28.500v-16.4M18.5 28.500v-20.3M20.5 28.500v-16.7M22.5 28.500v-16.9M24.5 28.500v-20.2M26.5 28.500v-24.3M28.5 28.500v-17.2M30.5 28.500v-18.2M32.5 28.500v-22.3M34.5 28.500v-25.5M36.5 28.500v-21.8M38.5 28.500v-20M40.5 28.500v-27M42.5 28.500v-16.5M44.5 28.500v-24.6M46.5 28.500v-18.9M48.5 28.500v-17.4M50.5 28.500v-17.2M52.5 28.500v-19.1M54.5 28.500v-24.2M56.5 28.500v-17.8M58.5 28.500v-21.8M60.5 28.500v-22.4M62.5 28.500v-19.7M64.5 28.500v-21.5M66.5 28.500v-27M68.5 28.500v-16.6M70.5 28.500v-18.1M72.5 28.500v-22.8M74.5 28.500v-20.3M76.5 28.500v-19.1M78.5 28.500v-21.9M80.5 28.500v-20.5M82.5 28.500v-19M84.5 28.500v-23.9M86.5 28.500v-23M88.5 28.500v-18.4M90.5 28.500v-21.7M92.5 28.500v-27M94.5 28.500v-24.8M96.5 28.500v-23.3M98.5 28.500v-18.9M100.5 28.500v-25.8M102.5 28.500v-17.2M104.5 28.500v-20.2M106.5 28.500v-23.6M108.5 28.500v-17.5M110.5 28.500v-20.9M112.5 28.500v-16.4M114.5 28.500v-22.7M116.5 28.500v-23.6M118.5 28.500v-27M120.5 28.500v-24.8M122.5 28.500v-19.1M124.5 28.500v-23M126.5 28.500v-21.9M128.5 28.500v-21.8M130.5 28.500v-20.6M132.5 28.500v-24.4M134.5 28.500v-25.4M136.5 28.500v-20.7M138.5 28.500v-22.6M140.5 28.500v-16.6M142.5 28.500v-23M144.5 28.500v-27M146.5 28.500v-25.9M148.5 28.500v-24.2M150.5 28.500v-18.8M152.5 28.500v-19.9M154.5 28.500v-22.7M156.5 28.500v-16.2M158.5 28.500v-20.6M160.5 28.500v-17.7M162.5 28.500v-17.2M164.5 28.500v-16.6M166.5 28.500v-23.7M168.5 28.500v-17.3M170.5 28.500v-27M172.5 28.500v-19.9M174.5 28.500v-24.7M176.5 28.500v-16.8M178.5 28.500v-20.5" stroke="#0c3f5e" stroke-width="1.100" fill="none"/>
<path d="M0 16.700h179" stroke="#14506f" stroke-width=".8"/>
<rect x="14.1" y="1" width="1.200" height="2.500" fill="#9a4e28"/>
<rect x="40.2" y="1" width="1.200" height="2.500" fill="#9a4e28"/>
<rect x="66.3" y="1" width="1.200" height="2.500" fill="#9a4e28"/>
<rect x="92.4" y="1" width="1.200" height="2.500" fill="#9a4e28"/>
<rect x="118.5" y="1" width="1.200" height="2.500" fill="#9a4e28"/>
<rect x="144.5" y="1" width="1.200" height="2.500" fill="#9a4e28"/>
<rect x="170.7" y="1" width="1.200" height="2.500" fill="#9a4e28"/>
<rect x="5" y="2.500" width="1" height="1.500" fill="#9a4e28"/><rect x="12.500" y="2" width="1" height="1.500" fill="#9a4e28"/><rect x="46.500" y="2.500" width="1" height="1.500" fill="#9a4e28"/>
</svg>
<div class="a" style="left:182.200px;top:428px;width:1.600px;height:277px;background:#5a5a5a"></div>
<svg style="left:178px;top:416px" width="10" height="14" viewBox="0 0 10 14"><path d="M1 1h8v8.500L5 13 1 9.500z" fill="#111" stroke="#a8a8a8" stroke-width="1.500" stroke-linejoin="round"/></svg>
<div class="a" style="left:135.500px;top:711px;width:1213px;height:5.500px;background:#181818;border-radius:3px"></div>
<div class="a" style="left:0;top:727.500px;width:1365px;height:1.500px;background:#0c2428"></div>
<div class="a" style="left:48px;top:727.500px;width:288px;height:1.500px;background:#f4f4f4"></div>
<!--/CLIPS-->
<!--DIALOG-->
<!-- dialog -->
<div id="dlg"></div>
<div class="hr" style="left:364px;top:68px;width:638px;background:#2c2c2c"></div>
<span class="t b" id="d0" style="left:371.300px;top:51.500px;font-size:13px;color:#f0f0f0;letter-spacing:-0.3px">Export</span>
<div class="a" style="left:805px;top:86px;width:180px;height:22px;background:#1c1c1c;border-radius:4px"></div>
<span class="t dt" id="d1" style="left:725.200px;top:97px;letter-spacing:0.03px">Name</span>
<span class="t dt" id="d2" style="left:813.600px;top:97px;color:#e6e6e6;letter-spacing:-0.28px">0223 (2)</span>
<span class="t dt" id="d3" style="left:725.200px;top:134px;letter-spacing:0.02px">Export to</span>
<div class="a" style="left:805px;top:122px;width:152px;height:22px;background:#353538;border-radius:4px"></div>
<span class="t dt" id="d4" style="left:813.600px;top:134px;color:#e8e8e8;letter-spacing:-0.17px">E:/0223 (2).mp4</span>
<div class="a" style="left:961px;top:122px;width:22px;height:22px;background:#4b4b4f;border-radius:4px"></div>
<svg style="left:965px;top:126.500px" width="15" height="13" viewBox="0 0 15 13"><path d="M1 2.200A1.200 1.200 0 0 1 2.200 1h3.300l1.500 1.800h5.800A1.200 1.200 0 0 1 14 4v6.800a1.200 1.200 0 0 1-1.200 1.200H2.200A1.200 1.200 0 0 1 1 10.800z" fill="none" stroke="#f4f4f4" stroke-width="1.600" stroke-linejoin="round"/><path d="M1.500 5.200h12" stroke="#f4f4f4" stroke-width="1.300"/></svg>
<div class="hr" style="left:723.500px;top:168px;width:263.500px"></div>
<span class="t dt" id="d5" style="left:725.200px;top:196px;letter-spacing:-0.02px">Waterm...</span>
<div class="dd" style="left:802px;top:184px;width:181px;height:22px"></div>
<span class="t b c" id="d6" style="left:884px;top:196px;font-size:13px;color:#f0f0f0;letter-spacing:0.34px">Off</span>
<svg style="left:969.500px;top:193px" width="9" height="6" viewBox="0 0 9 6"><path d="M1 1.200 4.500 4.600 8 1.200" class="ic" style="stroke:#f0f0f0;stroke-width:1.500"/></svg>
<div class="hr" style="left:725px;top:221px;width:262px"></div>
<div class="a" style="left:725px;top:243px;width:12px;height:12px;background:#00c2ce;border-radius:2.500px"></div>
<svg style="left:727px;top:245.5px" width="8" height="7" viewBox="0 0 8 7"><path d="M1.200 3.500 3.200 5.400 6.800 1.500" class="ic" style="stroke:#fff;stroke-width:1.400"/></svg>
<span class="t b" id="d7" style="left:745.500px;top:249.500px;font-size:13px;color:#f0f0f0">Video</span>
<svg style="left:785.500px;top:247.500px" width="7" height="4" viewBox="0 0 7 4"><path d="M0 4h7L3.500 0z" fill="#9a9a9a"/></svg>
<div class="a" style="left:979px;top:240px;width:6px;height:225px;background:#808080;border-radius:3px"></div>
<span class="t dt" id="d8l" style="left:725.200px;top:282px;letter-spacing:-0.28px">Resol...</span>
<div class="dd" style="left:805px;top:270px;width:166px;height:22px"></div>
<span class="t b c" id="d8v" style="left:880px;top:281.5px;font-size:13px;color:#f0f0f0;letter-spacing:-0.38px">1080P</span>
<svg style="left:957.500px;top:278.5px" width="9" height="6" viewBox="0 0 9 6"><path d="M1 1.200 4.500 4.600 8 1.200" class="ic" style="stroke:#f0f0f0;stroke-width:1.500"/></svg>
<span class="t dt" id="d9l" style="left:725.200px;top:320px;letter-spacing:-0.07px">Bit rate</span>
<div class="dd" style="left:805px;top:308px;width:166px;height:22px"></div>
<span class="t b c" id="d9v" style="left:880px;top:319.5px;font-size:13px;color:#f0f0f0;letter-spacing:-0.28px">Lower</span>
<svg style="left:957.500px;top:316.5px" width="9" height="6" viewBox="0 0 9 6"><path d="M1 1.200 4.500 4.600 8 1.200" class="ic" style="stroke:#f0f0f0;stroke-width:1.500"/></svg>
<span class="t dt" id="d10l" style="left:725.200px;top:358px;letter-spacing:-0.16px">Codec</span>
<div class="dd" style="left:805px;top:346px;width:166px;height:22px"></div>
<span class="t b c" id="d10v" style="left:880px;top:357.5px;font-size:13px;color:#f0f0f0;letter-spacing:-0.18px">H.264</span>
<svg style="left:957.500px;top:354.5px" width="9" height="6" viewBox="0 0 9 6"><path d="M1 1.200 4.500 4.600 8 1.200" class="ic" style="stroke:#f0f0f0;stroke-width:1.500"/></svg>
<span class="t dt" id="d11l" style="left:725.200px;top:396px;letter-spacing:0.02px">Format</span>
<div class="dd" style="left:805px;top:384px;width:166px;height:22px"></div>
<span class="t b c" id="d11v" style="left:880px;top:395.5px;font-size:13px;color:#f0f0f0;letter-spacing:0.02px">mp4</span>
<svg style="left:957.500px;top:392.5px" width="9" height="6" viewBox="0 0 9 6"><path d="M1 1.200 4.500 4.600 8 1.200" class="ic" style="stroke:#f0f0f0;stroke-width:1.500"/></svg>
<span class="t dt" id="d12l" style="left:725.200px;top:434px;letter-spacing:-0.2px">Frame rate</span>
<div class="dd" style="left:805px;top:422px;width:166px;height:22px"></div>
<span class="t b c" id="d12v" style="left:880px;top:433.5px;font-size:13px;color:#f0f0f0;letter-spacing:-0.35px">30fps</span>
<svg style="left:957.500px;top:430.5px" width="9" height="6" viewBox="0 0 9 6"><path d="M1 1.200 4.500 4.600 8 1.200" class="ic" style="stroke:#f0f0f0;stroke-width:1.500"/></svg>
<span class="t dt" id="d13" style="left:725.200px;top:469px;letter-spacing:0.12px">Optical flow</span>
<svg style="left:798px;top:463px" width="11" height="11" viewBox="0 0 11 11"><circle cx="5.500" cy="5.500" r="4.700" class="ic" style="stroke:#a0a0a0;stroke-width:1"/></svg>
<span class="t c" style="left:803.500px;top:468.700px;font-size:8px;color:#a8a8a8">?</span>
<div class="a" style="left:935px;top:460px;width:36px;height:16px;background:#4b4b4b;border-radius:8px"></div>
<div class="a" style="left:939px;top:464px;width:8px;height:8px;background:#fafafa;border-radius:4px"></div>
<span class="t dt" id="d14" style="left:725.200px;top:501px;color:#8a8a8a;letter-spacing:-0.24px">Color space: Rec. 709 SDR</span>
<div class="hr" style="left:725px;top:530px;width:262px"></div>
<div class="a" style="left:725px;top:552px;width:12px;height:12px;background:#00c2ce;border-radius:2.500px"></div>
<svg style="left:727px;top:554.5px" width="8" height="7" viewBox="0 0 8 7"><path d="M1.200 3.500 3.200 5.400 6.800 1.500" class="ic" style="stroke:#fff;stroke-width:1.400"/></svg>
<span class="t b" id="d15" style="left:745.500px;top:558.500px;font-size:13px;color:#f0f0f0;letter-spacing:-0.15px">Audio</span>
<svg style="left:786.500px;top:556.500px" width="7" height="4" viewBox="0 0 7 4"><path d="M0 4h7L3.500 0z" fill="#9a9a9a"/></svg>
<span class="t dt" id="d16" style="left:725.200px;top:597px;letter-spacing:0.02px">Format</span>
<div class="dd" style="left:805px;top:585px;width:166px;height:22px"></div>
<span class="t b c" id="d17" style="left:880px;top:596.500px;font-size:13px;color:#f0f0f0;letter-spacing:0.19px">MP3</span>
<svg style="left:957.500px;top:593.500px" width="9" height="6" viewBox="0 0 9 6"><path d="M1 1.200 4.500 4.600 8 1.200" class="ic" style="stroke:#f0f0f0;stroke-width:1.500"/></svg>
<div class="hr" style="left:364px;top:641px;width:638px;background:#2a2a2a"></div>
<svg style="left:380px;top:662px" width="18" height="14" viewBox="0 0 18 14"><rect x=".8" y=".8" width="16.400" height="12.400" rx="1.300" class="ic" style="stroke:#c8c8c8;stroke-width:1.300"/><path d="M4.200 1v12M13.800 1v12M1 4h3M1 7h16M1 10h3M14 4h3M14 10h3" class="ic" style="stroke:#c8c8c8;stroke-width:1.100"/></svg>
<span class="t dt" id="d18" style="left:403.500px;top:670px;color:#dadada;letter-spacing:-0.04px">Duration: 22s | Size: about 22 MB</span>
<div class="a" style="left:835px;top:658px;width:72px;height:22px;background:#00c1cd;border-radius:4px"></div>
<span class="t b" id="d19" style="left:851.600px;top:670px;font-size:13px;color:#fff;letter-spacing:-0.25px">Export</span>
<div class="a" style="left:915px;top:658px;width:72px;height:22px;background:#4d4d4d;border-radius:4px"></div>
<span class="t b" id="d20" style="left:931px;top:670px;font-size:13px;color:#fff;letter-spacing:-0.49px">Cancel</span>
<svg style="left:860px;top:580px" width="50" height="85" viewBox="860 580 50 85"><path d="M894.800 588.800 877.100 642.200" stroke="#ee1b22" stroke-width="2.200" fill="none"/><path d="M873.100 654.300 872.600 640.600 881.700 643.600z" fill="#ee1b22"/></svg>
<!--PHOTO-->
<div class="a" style="left:451px;top:85px;width:180px;height:320px;border-radius:6px;overflow:hidden;background:#e0b070">
<svg style="left:0;top:0;overflow:hidden" width="180" height="320" viewBox="0 0 180 320">
<defs>
<linearGradient id="pbg" x1="0" y1="0" x2="0" y2="1"><stop offset="0" stop-color="#c59860"/><stop offset=".1" stop-color="#d2a66c"/><stop offset=".22" stop-color="#f0c07c"/><stop offset=".4" stop-color="#f9cc84"/><stop offset=".55" stop-color="#fece80"/><stop offset=".64" stop-color="#fcbe68"/><stop offset=".73" stop-color="#f8aa4a"/><stop offset=".8" stop-color="#f09838"/><stop offset=".88" stop-color="#e08428"/><stop offset=".95" stop-color="#a85616"/><stop offset="1" stop-color="#4a2006"/></linearGradient>
<radialGradient id="sun" cx="127" cy="219" r="105" gradientUnits="userSpaceOnUse"><stop offset="0" stop-color="#fffbd8"/><stop offset=".18" stop-color="#fff2a8"/><stop offset=".38" stop-color="#ffe080"/><stop offset=".62" stop-color="#ffc458" stop-opacity=".55"/><stop offset="1" stop-color="#ffb040" stop-opacity="0"/></radialGradient>
<radialGradient id="sun2" cx="128" cy="235" r="50" gradientUnits="userSpaceOnUse"><stop offset="0" stop-color="#ffb848" stop-opacity=".55"/><stop offset=".6" stop-color="#ffa838" stop-opacity=".25"/><stop offset="1" stop-color="#ffa030" stop-opacity="0"/></radialGradient>
<linearGradient id="boy" x1="0" y1="0" x2="0" y2="1"><stop offset="0" stop-color="#804610"/><stop offset=".3" stop-color="#a45c1c"/><stop offset=".6" stop-color="#84420e"/><stop offset="1" stop-color="#421c06"/></linearGradient>
<linearGradient id="girl" x1="0" y1="0" x2="0" y2="1"><stop offset="0" stop-color="#8a4a10"/><stop offset=".35" stop-color="#a05810"/><stop offset=".7" stop-color="#74380a"/><stop offset="1" stop-color="#421c06"/></linearGradient>
<linearGradient id="gr" x1="0" y1="0" x2="0" y2="1"><stop offset="0" stop-color="#2a1204" stop-opacity="0"/><stop offset="1" stop-color="#2a1204" stop-opacity=".8"/></linearGradient>
<filter id="b0" x="-20%" y="-20%" width="140%" height="140%"><feGaussianBlur stdDeviation=".7"/></filter>
<filter id="b1" x="-20%" y="-20%" width="140%" height="140%"><feGaussianBlur stdDeviation="1.100"/></filter>
<filter id="b2" x="-30%" y="-30%" width="160%" height="160%"><feGaussianBlur stdDeviation="2.500"/></filter>
<filter id="b3" x="-50%" y="-50%" width="200%" height="200%"><feGaussianBlur stdDeviation="3.600"/></filter>
<filter id="b4" x="-50%" y="-50%" width="200%" height="200%"><feGaussianBlur stdDeviation="5"/></filter>
<filter id="b7" x="-50%" y="-50%" width="200%" height="200%"><feGaussianBlur stdDeviation="8"/></filter>
</defs>
<rect width="180" height="320" fill="url(#pbg)"/>
<ellipse cx="168" cy="25" rx="40" ry="50" fill="#a87848" opacity=".4" filter="url(#b7)"/>
<ellipse cx="70" cy="0" rx="40" ry="16" fill="#a87848" opacity=".3" filter="url(#b7)"/>
<rect width="180" height="320" fill="url(#sun)"/>
<ellipse cx="80" cy="56" rx="30" ry="21" fill="#f8b078" opacity=".8" filter="url(#b4)"/>
<ellipse cx="91" cy="66" rx="9" ry="8" fill="#f08860" opacity=".5" filter="url(#b2)"/>
<ellipse cx="78" cy="57" rx="6" ry="4.500" fill="#ffe88a" opacity=".9" filter="url(#b2)"/>
<g filter="url(#b3)" fill="none" stroke="#8a5020" stroke-linecap="round" opacity=".55">
<path d="M47 0C44 40 50 70 48 100S54 140 56 170" stroke-width="7" opacity=".26"/>
<path d="M36 30C30 70 30 100 28 130S32 160 30 190" stroke-width="7" opacity=".22"/>
<path d="M76 0C78 12 77 24 80 34" stroke-width="9" opacity=".4"/>
<path d="M92 72C96 95 96 115 103 140" stroke-width="8" opacity=".24"/>
<path d="M154 14C158 40 150 70 152 100S150 140 140 160" stroke-width="9" opacity=".42"/>
<path d="M167 30C166 60 162 90 164 120" stroke-width="6" opacity=".2"/>
</g>
<g filter="url(#b3)" fill="#7a4418" opacity=".55">
<ellipse cx="30" cy="78" rx="7" ry="6" opacity="0.34"/>
<ellipse cx="48" cy="78" rx="6" ry="7" opacity="0.38"/>
<ellipse cx="27" cy="112" rx="6" ry="6" opacity="0.34"/>
<ellipse cx="30" cy="145" rx="5" ry="6" opacity="0.32"/>
<ellipse cx="38" cy="50" rx="6" ry="5" opacity="0.2"/>
<ellipse cx="97" cy="100" rx="6" ry="9" opacity="0.36"/>
<ellipse cx="102" cy="130" rx="5" ry="6" opacity="0.26"/>
<ellipse cx="155" cy="30" rx="6" ry="8" opacity="0.5"/>
<ellipse cx="157" cy="52" rx="6" ry="8" opacity="0.5"/>
<ellipse cx="146" cy="72" rx="6" ry="6" opacity="0.42"/>
<ellipse cx="150" cy="96" rx="5" ry="6" opacity="0.4"/>
<ellipse cx="155" cy="125" rx="6" ry="6" opacity="0.4"/>
<ellipse cx="140" cy="152" rx="5" ry="5" opacity="0.32"/>
<ellipse cx="60" cy="185" rx="5" ry="6" opacity="0.28"/>
<ellipse cx="26" cy="190" rx="5" ry="5" opacity="0.3"/>
<ellipse cx="134" cy="170" rx="5" ry="5" opacity="0.24"/>
</g>
<path d="M118 178c2 12 1 25 4 40 1 8 2 14 2 22" stroke="#d08c3c" stroke-width="1" fill="none" opacity=".5" filter="url(#b0)"/>
<g fill="#a86a2c" opacity=".7" filter="url(#b0)"><circle cx="119" cy="187" r="1.600"/><circle cx="121" cy="200" r="1.300"/><circle cx="124" cy="212" r="1.200"/><circle cx="102" cy="214" r="1.200"/></g>
<g filter="url(#b1)" fill="none" stroke-linecap="round">
<path d="M112.9 322Q114.3 287.3 117.6 260.5" stroke="#a85a16" stroke-width="3.4" opacity="0.38"/>
<path d="M168.6 322Q168.4 300.2 168.0 284.0" stroke="#a85a16" stroke-width="3.4" opacity="0.36"/>
<path d="M164.6 322Q164.4 298.7 164.1 281.3" stroke="#a85a16" stroke-width="2.0" opacity="0.34"/>
<path d="M103.8 322Q102.4 300.5 99.2 284.6" stroke="#a85a16" stroke-width="2.1" opacity="0.43"/>
<path d="M139.4 322Q140.9 297.9 144.2 279.7" stroke="#a85a16" stroke-width="1.8" opacity="0.35"/>
<path d="M20.6 322Q22.3 300.7 26.5 284.9" stroke="#a85a16" stroke-width="1.9" opacity="0.25"/>
<path d="M179.7 322Q178.7 284.9 176.4 256.2" stroke="#a85a16" stroke-width="3.4" opacity="0.33"/>
<path d="M123.1 322Q125.2 297.0 130.1 278.2" stroke="#a85a16" stroke-width="2.9" opacity="0.44"/>
<path d="M163.2 322Q162.6 295.3 161.0 275.1" stroke="#a85a16" stroke-width="1.8" opacity="0.24"/>
<path d="M9.1 322Q9.6 295.3 10.8 275.1" stroke="#a85a16" stroke-width="1.5" opacity="0.37"/>
<path d="M59.8 322Q61.4 295.1 64.9 274.8" stroke="#a85a16" stroke-width="2.5" opacity="0.28"/>
<path d="M86.5 322Q84.4 288.0 79.4 261.7" stroke="#a85a16" stroke-width="3.5" opacity="0.21"/>
<path d="M136.5 322Q134.1 285.4 128.8 257.1" stroke="#a85a16" stroke-width="3.1" opacity="0.29"/>
<path d="M104.6 322Q102.4 300.6 97.4 284.7" stroke="#a85a16" stroke-width="1.9" opacity="0.44"/>
<path d="M33.6 322Q35.6 287.0 40.4 260.1" stroke="#a85a16" stroke-width="3.4" opacity="0.29"/>
<path d="M63.0 322Q64.3 291.2 67.4 267.7" stroke="#a85a16" stroke-width="1.7" opacity="0.39"/>
<path d="M145.3 322Q143.1 285.1 137.9 256.6" stroke="#a85a16" stroke-width="3.4" opacity="0.22"/>
<path d="M60.4 322Q62.4 289.7 67.1 264.8" stroke="#a85a16" stroke-width="2.2" opacity="0.43"/>
<path d="M98.4 322Q97.5 295.1 95.5 274.7" stroke="#a85a16" stroke-width="1.9" opacity="0.22"/>
<path d="M24.7 322Q27.1 288.2 32.6 262.3" stroke="#a85a16" stroke-width="1.8" opacity="0.21"/>
<path d="M180.5 322Q180.1 291.1 179.0 267.4" stroke="#a85a16" stroke-width="2.0" opacity="0.35"/>
<path d="M150.7 322Q150.3 292.5 149.4 270.0" stroke="#a85a16" stroke-width="1.6" opacity="0.43"/>
<path d="M3.1 322Q4.7 291.8 8.5 268.7" stroke="#a85a16" stroke-width="1.8" opacity="0.38"/>
<path d="M173.7 322Q175.0 289.3 178.3 264.2" stroke="#a85a16" stroke-width="1.7" opacity="0.31"/>
<path d="M24.8 322Q23.8 285.4 21.5 257.1" stroke="#a85a16" stroke-width="2.4" opacity="0.45"/>
<path d="M155.5 322Q155.3 283.0 154.8 252.8" stroke="#a85a16" stroke-width="2.5" opacity="0.38"/>
<path d="M86.1 322Q85.6 295.5 84.6 275.4" stroke="#a85a16" stroke-width="1.8" opacity="0.29"/>
<path d="M180.8 322Q181.4 283.3 182.9 253.3" stroke="#a85a16" stroke-width="2.5" opacity="0.28"/>
<path d="M13.6 322Q14.9 295.8 18.1 276.0" stroke="#a85a16" stroke-width="3.2" opacity="0.29"/>
<path d="M143.2 322Q144.1 286.7 146.3 259.4" stroke="#a85a16" stroke-width="2.8" opacity="0.39"/>
<path d="M64.6 322Q63.5 288.0 61.1 261.8" stroke="#a85a16" stroke-width="2.5" opacity="0.39"/>
<path d="M125.5 322Q127.6 295.4 132.6 275.3" stroke="#a85a16" stroke-width="2.8" opacity="0.35"/>
<path d="M-0.8 322Q-2.0 290.8 -4.8 266.9" stroke="#a85a16" stroke-width="2.8" opacity="0.32"/>
<path d="M148.9 322Q150.3 289.0 153.7 263.6" stroke="#a85a16" stroke-width="2.2" opacity="0.36"/>
<path d="M134.2 322Q133.5 285.7 131.8 257.7" stroke="#a85a16" stroke-width="3.2" opacity="0.42"/>
<path d="M125.0 322Q127.2 283.0 132.3 252.8" stroke="#a85a16" stroke-width="2.5" opacity="0.33"/>
<path d="M27.9 322Q30.0 285.6 34.9 257.4" stroke="#a85a16" stroke-width="2.5" opacity="0.37"/>
<path d="M130.9 322Q129.3 287.5 125.6 260.9" stroke="#a85a16" stroke-width="3.1" opacity="0.35"/>
<path d="M120.8 322Q121.4 293.1 122.8 271.1" stroke="#a85a16" stroke-width="3.0" opacity="0.36"/>
<path d="M131.0 322Q129.4 300.2 125.6 284.1" stroke="#a85a16" stroke-width="2.4" opacity="0.36"/>
<path d="M37.7 322Q38.4 288.3 39.8 262.4" stroke="#a85a16" stroke-width="1.6" opacity="0.32"/>
<path d="M39.1 322Q37.3 299.8 33.2 283.2" stroke="#a85a16" stroke-width="2.1" opacity="0.25"/>
<path d="M33.0 322Q32.8 300.1 32.4 283.8" stroke="#a85a16" stroke-width="2.3" opacity="0.35"/>
<path d="M106.8 322Q108.7 296.4 113.2 277.2" stroke="#a85a16" stroke-width="1.5" opacity="0.30"/>
<path d="M48.8 322Q47.0 293.3 42.6 271.5" stroke="#a85a16" stroke-width="3.2" opacity="0.29"/>
</g>
<g filter="url(#b0)">
<path d="M183 186C173 185 165 191 165 199.500C165 206 166 211 167.500 215.500C162 218 157 222 153.600 226C149 231 146 236 146 241C146 246 148 250 151 252C145 253.500 138 254.500 124 254L123 258C133 262 146 261 154 257C157 259 159 261 160 263C161 280 161 300 161.300 322L182 322Z" fill="url(#girl)"/>
<path d="M56.500 190C64 190 69.500 196 69.500 203.500C69.500 209 67.500 213 64 216L64.500 219C70 221 78 222 84.500 224C88 228 90 236 93 241C102 247 112 250 123 251L124 257C114 258 104 257 96.500 254.500C91 252 87 249 84 246C84 256 84.500 266 84.500 274C85 290 87 305 88 322L40 322C41 305 41.500 295 41.700 283C41.500 270 41 258 40.600 248C30 254 14 260 0 263L-2 263L-2 254C12 250 24 244 31 238C34 233 36 228 39.500 225.500C44 222.500 48 221 49.500 219L50 216C46 213 43.500 209 43.500 203.500C43.500 196 49 190 56.500 190Z" fill="url(#boy)"/>
</g>
<rect width="180" height="320" fill="url(#sun2)"/>
<ellipse cx="61" cy="230" rx="8" ry="3" fill="#c88a40" opacity=".4" filter="url(#b2)"/>
<ellipse cx="168" cy="219" rx="2.500" ry="1.500" fill="#ffe098" opacity=".9" filter="url(#b0)"/>
<g filter="url(#b1)" fill="none" stroke-linecap="round">
<path d="M3.7 322Q1.8 299.3 -2.8 282.3" stroke="#2e1203" stroke-width="3.0" opacity="0.83"/>
<path d="M51.5 322Q49.8 304.6 45.6 292.0" stroke="#2e1203" stroke-width="2.7" opacity="0.61"/>
<path d="M26.2 322Q26.0 304.0 25.8 290.8" stroke="#4a2006" stroke-width="2.2" opacity="0.67"/>
<path d="M62.3 322Q59.9 293.6 54.3 271.9" stroke="#4a2006" stroke-width="2.0" opacity="0.55"/>
<path d="M160.0 322Q159.7 300.3 158.9 284.1" stroke="#5a2808" stroke-width="3.9" opacity="0.53"/>
<path d="M177.9 322Q180.1 304.0 185.3 290.9" stroke="#2e1203" stroke-width="3.8" opacity="0.73"/>
<path d="M52.9 322Q50.6 306.6 45.3 295.7" stroke="#2e1203" stroke-width="3.9" opacity="0.62"/>
<path d="M50.3 322Q48.5 302.0 44.2 287.4" stroke="#5a2808" stroke-width="3.2" opacity="0.51"/>
<path d="M4.4 322Q3.9 309.0 2.7 300.0" stroke="#2e1203" stroke-width="2.9" opacity="0.51"/>
<path d="M85.2 322Q85.2 311.0 85.1 303.6" stroke="#2e1203" stroke-width="3.7" opacity="0.53"/>
<path d="M110.1 322Q110.8 302.1 112.4 287.4" stroke="#3a1804" stroke-width="3.1" opacity="0.41"/>
<path d="M20.4 322Q21.4 306.0 23.8 294.6" stroke="#3a1804" stroke-width="3.1" opacity="0.61"/>
<path d="M64.2 322Q64.6 296.6 65.6 277.4" stroke="#2e1203" stroke-width="1.9" opacity="0.65"/>
<path d="M124.5 322Q125.4 309.6 127.5 301.0" stroke="#5a2808" stroke-width="2.2" opacity="0.75"/>
<path d="M76.6 322Q77.6 300.0 79.9 283.7" stroke="#5a2808" stroke-width="3.2" opacity="0.79"/>
<path d="M153.5 322Q154.3 302.1 156.4 287.4" stroke="#2e1203" stroke-width="3.4" opacity="0.61"/>
<path d="M138.0 322Q135.6 305.6 130.1 293.8" stroke="#2e1203" stroke-width="3.5" opacity="0.69"/>
<path d="M84.9 322Q83.3 305.4 79.5 293.5" stroke="#5a2808" stroke-width="3.3" opacity="0.84"/>
<path d="M97.1 322Q97.3 303.1 97.7 289.3" stroke="#4a2006" stroke-width="1.9" opacity="0.52"/>
<path d="M12.8 322Q15.0 310.5 19.9 302.7" stroke="#5a2808" stroke-width="2.5" opacity="0.84"/>
<path d="M182.7 322Q180.5 297.5 175.5 279.1" stroke="#4a2006" stroke-width="3.7" opacity="0.68"/>
<path d="M150.3 322Q152.2 309.5 156.6 300.9" stroke="#5a2808" stroke-width="4.0" opacity="0.47"/>
<path d="M110.6 322Q108.9 303.3 105.2 289.7" stroke="#3a1804" stroke-width="3.2" opacity="0.65"/>
<path d="M119.8 322Q118.7 296.6 116.3 277.4" stroke="#3a1804" stroke-width="3.1" opacity="0.73"/>
<path d="M160.4 322Q160.1 309.0 159.3 300.0" stroke="#5a2808" stroke-width="2.5" opacity="0.62"/>
<path d="M171.6 322Q169.4 304.1 164.5 291.2" stroke="#4a2006" stroke-width="3.3" opacity="0.66"/>
<path d="M123.1 322Q125.2 305.8 130.2 294.3" stroke="#4a2006" stroke-width="3.0" opacity="0.52"/>
<path d="M99.6 322Q100.8 306.6 103.6 295.6" stroke="#4a2006" stroke-width="2.9" opacity="0.76"/>
<path d="M157.6 322Q157.1 302.5 155.8 288.2" stroke="#3a1804" stroke-width="2.1" opacity="0.69"/>
<path d="M12.9 322Q10.9 298.2 6.3 280.3" stroke="#5a2808" stroke-width="2.1" opacity="0.51"/>
<path d="M160.1 322Q159.3 302.0 157.3 287.2" stroke="#3a1804" stroke-width="3.6" opacity="0.64"/>
<path d="M68.5 322Q70.7 294.5 75.7 273.6" stroke="#4a2006" stroke-width="2.7" opacity="0.74"/>
<path d="M12.6 322Q12.5 293.2 12.4 271.3" stroke="#5a2808" stroke-width="2.3" opacity="0.56"/>
<path d="M40.7 322Q41.3 305.0 42.5 292.7" stroke="#5a2808" stroke-width="2.6" opacity="0.57"/>
<path d="M131.4 322Q130.4 304.5 128.2 291.7" stroke="#2e1203" stroke-width="3.2" opacity="0.63"/>
<path d="M107.2 322Q108.4 300.1 111.1 283.8" stroke="#3a1804" stroke-width="2.7" opacity="0.42"/>
<path d="M31.7 322Q31.6 307.8 31.5 297.8" stroke="#2e1203" stroke-width="3.9" opacity="0.40"/>
<path d="M84.5 322Q85.0 293.6 86.4 272.1" stroke="#5a2808" stroke-width="2.7" opacity="0.61"/>
<path d="M32.6 322Q30.6 298.5 25.8 280.8" stroke="#5a2808" stroke-width="3.7" opacity="0.47"/>
<path d="M44.3 322Q42.6 306.1 38.8 294.7" stroke="#4a2006" stroke-width="2.4" opacity="0.41"/>
<path d="M163.7 322Q164.9 304.7 167.8 292.3" stroke="#3a1804" stroke-width="2.5" opacity="0.71"/>
<path d="M122.3 322Q124.5 302.2 129.5 287.5" stroke="#2e1203" stroke-width="2.1" opacity="0.53"/>
<path d="M122.5 322Q120.8 296.9 117.1 278.0" stroke="#3a1804" stroke-width="2.2" opacity="0.66"/>
<path d="M119.1 322Q121.1 299.2 125.7 282.1" stroke="#2e1203" stroke-width="3.4" opacity="0.48"/>
<path d="M64.2 322Q66.6 310.4 72.1 302.5" stroke="#4a2006" stroke-width="2.8" opacity="0.48"/>
<path d="M35.8 322Q36.4 310.9 37.6 303.4" stroke="#2e1203" stroke-width="3.4" opacity="0.40"/>
<path d="M8.3 322Q7.9 295.9 6.9 276.2" stroke="#2e1203" stroke-width="1.9" opacity="0.82"/>
<path d="M130.3 322Q131.7 306.9 135.1 296.2" stroke="#5a2808" stroke-width="2.0" opacity="0.42"/>
<path d="M42.3 322Q41.8 310.7 40.6 303.1" stroke="#2e1203" stroke-width="1.9" opacity="0.78"/>
<path d="M79.9 322Q81.7 298.7 85.9 281.3" stroke="#4a2006" stroke-width="3.9" opacity="0.48"/>
<path d="M91.6 322Q91.8 303.6 92.1 290.1" stroke="#2e1203" stroke-width="2.0" opacity="0.76"/>
<path d="M13.1 322Q11.5 291.7 7.7 268.5" stroke="#4a2006" stroke-width="2.0" opacity="0.68"/>
<path d="M79.1 322Q78.7 304.5 77.8 291.8" stroke="#4a2006" stroke-width="3.5" opacity="0.73"/>
<path d="M166.8 322Q166.6 305.5 166.0 293.6" stroke="#4a2006" stroke-width="3.6" opacity="0.65"/>
<path d="M22.8 322Q24.1 301.9 27.3 287.1" stroke="#5a2808" stroke-width="2.4" opacity="0.54"/>
<path d="M21.1 322Q19.9 310.1 17.1 302.0" stroke="#5a2808" stroke-width="2.0" opacity="0.84"/>
<path d="M120.9 322Q120.9 306.1 120.8 294.8" stroke="#4a2006" stroke-width="2.3" opacity="0.76"/>
<path d="M161.2 322Q159.1 293.7 154.3 272.2" stroke="#5a2808" stroke-width="3.5" opacity="0.74"/>
<path d="M100.4 322Q101.2 293.5 102.9 271.8" stroke="#3a1804" stroke-width="3.5" opacity="0.60"/>
<path d="M148.9 322Q151.1 298.4 156.2 280.7" stroke="#5a2808" stroke-width="3.4" opacity="0.52"/>
<path d="M148.0 322Q146.3 304.0 142.1 290.9" stroke="#4a2006" stroke-width="1.9" opacity="0.46"/>
<path d="M89.6 322Q87.3 305.2 82.1 293.0" stroke="#3a1804" stroke-width="3.0" opacity="0.41"/>
<path d="M6.4 322Q5.7 309.1 4.1 300.2" stroke="#3a1804" stroke-width="3.7" opacity="0.50"/>
<path d="M76.8 322Q76.0 304.4 74.1 291.6" stroke="#4a2006" stroke-width="1.8" opacity="0.73"/>
<path d="M14.7 322Q13.1 301.0 9.5 285.4" stroke="#5a2808" stroke-width="3.4" opacity="0.74"/>
<path d="M77.8 322Q77.0 303.0 75.2 289.1" stroke="#4a2006" stroke-width="2.8" opacity="0.61"/>
<path d="M77.8 322Q79.0 302.8 82.0 288.7" stroke="#5a2808" stroke-width="3.9" opacity="0.84"/>
<path d="M107.9 322Q109.4 309.6 112.9 301.2" stroke="#3a1804" stroke-width="2.7" opacity="0.49"/>
<path d="M-2.8 322Q-4.1 293.3 -7.0 271.4" stroke="#2e1203" stroke-width="3.4" opacity="0.58"/>
<path d="M37.1 322Q35.7 306.1 32.3 294.7" stroke="#2e1203" stroke-width="3.0" opacity="0.74"/>
</g>
<g filter="url(#b2)" fill="#2a1004">
<ellipse cx="10" cy="306" rx="16" ry="13" opacity="0.75"/>
<ellipse cx="38" cy="312" rx="14" ry="11" opacity="0.75"/>
<ellipse cx="100" cy="309" rx="18" ry="12" opacity="0.7"/>
<ellipse cx="128" cy="304" rx="12" ry="14" opacity="0.6"/>
<ellipse cx="150" cy="311" rx="10" ry="9" opacity="0.65"/>
<ellipse cx="5" cy="286" rx="5" ry="13" opacity="0.45"/>
<ellipse cx="140" cy="290" rx="5" ry="10" opacity="0.45"/>
<ellipse cx="28" cy="296" rx="6" ry="10" opacity="0.5"/>
<ellipse cx="112" cy="292" rx="5" ry="9" opacity="0.4"/>
</g>
<rect y="296" width="180" height="24" fill="url(#gr)"/>
</svg></div>
<!--/PHOTO-->
<div class="a" style="left:459px;top:93px;width:83px;height:20px;background:rgba(75,58,40,.55);border-radius:4px"></div>
<svg style="left:464px;top:97px" width="10" height="12" viewBox="0 0 10 12"><path d="M1.800 7.800 6.800 2.300a.8.800 0 0 1 1.200 0l.5.500a.8.800 0 0 1 0 1.200L3.600 9.200l-2.100.4zM.8 11h8.400" class="ic" style="stroke:#e8e8e8;stroke-width:1"/></svg>
<span class="t b" id="d21" style="left:478.500px;top:103.500px;font-size:13px;color:#f0f0f0;letter-spacing:-0.24px">Edit cover</span>
<!--/DIALOG-->
</div>
</body></html>
